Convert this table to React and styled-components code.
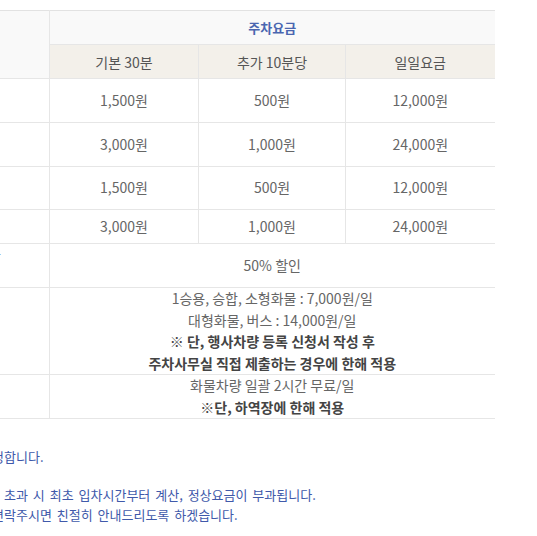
import React from 'react';
import styled, { createGlobalStyle } from 'styled-components';

const Global = createGlobalStyle`
  html, body { margin: 0; padding: 0; background: #fff; overflow: hidden; }
  body { font-family: "Noto Sans CJK KR", "Noto Sans", sans-serif; }
`;

const Wrapper = styled.div`
  padding-top: 10px;
`;

const TableArea = styled.div`
  width: 594px;
  margin-left: -100px;
`;

const Table = styled.table`
  width: 594px;
  border-collapse: collapse;
  table-layout: fixed;
  border-top: 1px solid #e2e2e2;
`;

const Row = styled.tr`
  & > th, & > td { height: ${p => p.$h}px; }
`;

const Th = styled.th`
  padding: 0;
  border: 1px solid #e6e6e6;
  border-top: none;
  font-weight: ${p => (p.$title ? 700 : 400)};
  color: ${p => (p.$title ? '#4a66b0' : '#555')};
  background: ${p => (p.$beige ? '#f3f0ea' : '#f9f9f9')};
  font-size: ${p => (p.$title ? '13px' : '14px')};
  text-align: center;
  vertical-align: middle;
  &:last-child { border-right: none; }
`;

const Td = styled.td`
  padding: 0;
  border: 1px solid #e6e6e6;
  font-size: 14px;
  line-height: 21.5px;
  color: #666;
  text-align: center;
  vertical-align: middle;
  white-space: nowrap;
  &:last-child { border-right: none; }
`;

const Strong = styled.span`
  display: block;
  font-weight: 700;
  color: #444;
`;

const Line = styled.span`
  display: block;
`;

const Notes = styled.div`
  margin-top: 28px;
  font-size: 13px;
  line-height: 20px;
  word-spacing: 2px;
  color: #4059aa;
`;

const NoteLine = styled.p`
  margin: ${p => (p.$gap ? '18px' : '0')} 0 0;
  display: flex;
  white-space: nowrap;
  padding-left: ${p => p.$start}px;
`;

const Hidden = styled.span`
  display: inline-flex;
  justify-content: flex-end;
  width: 0;
`;

export default function App() {
  return (
    <>
      <Global />
      <Wrapper>
        <TableArea>
          <Table>
            <colgroup>
              <col style={{ width: 149 }} />
              <col style={{ width: 149 }} />
              <col style={{ width: 147 }} />
              <col style={{ width: 149 }} />
            </colgroup>
            <thead>
              <Row $h={33}>
                <Th rowSpan={2}>구분</Th>
                <Th colSpan={3} $title>주차요금</Th>
              </Row>
              <Row $h={33}>
                <Th $beige>기본 30분</Th>
                <Th $beige>추가 10분당</Th>
                <Th $beige>일일요금</Th>
              </Row>
            </thead>
            <tbody>
              <Row $h={43}>
                <Td>소형</Td>
                <Td>1,500원</Td>
                <Td>500원</Td>
                <Td>12,000원</Td>
              </Row>
              <Row $h={43}>
                <Td>대형</Td>
                <Td>3,000원</Td>
                <Td>1,000원</Td>
                <Td>24,000원</Td>
              </Row>
              <Row $h={42}>
                <Td>소형</Td>
                <Td>1,500원</Td>
                <Td>500원</Td>
                <Td>12,000원</Td>
              </Row>
              <Row $h={33}>
                <Td>대형</Td>
                <Td>3,000원</Td>
                <Td>1,000원</Td>
                <Td>24,000원</Td>
              </Row>
              <Row $h={43}>
                <Td>
                  <Line>저공해차</Line>
                  <Line>경차</Line>
                </Td>
                <Td colSpan={3}>50% 할인</Td>
              </Row>
              <Row $h={85}>
                <Td>행사</Td>
                <Td colSpan={3}>
                  <Line>1승용, 승합, 소형화물 : 7,000원/일</Line>
                  <Line>대형화물, 버스 : 14,000원/일</Line>
                  <Strong>※ 단, 행사차량 등록 신청서 작성 후</Strong>
                  <Strong>주차사무실 직접 제출하는 경우에 한해 적용</Strong>
                </Td>
              </Row>
              <Row $h={43}>
                <Td>화물</Td>
                <Td colSpan={3}>
                  <Line>화물차량 일괄 2시간 무료/일</Line>
                  <Strong>※단, 하역장에 한해 적용</Strong>
                </Td>
              </Row>
            </tbody>
          </Table>
        </TableArea>
        <Notes>
          <NoteLine $start={4}>
            <Hidden>※ 주차요금은 관련 조례에 따라 결정</Hidden>
            합니다.
          </NoteLine>
          <NoteLine $start={4} $gap>
            <Hidden>※ 회차시간 10분&nbsp;</Hidden>
            초과 시 최초 입차시간부터 계산, 정상요금이 부과됩니다.
          </NoteLine>
          <NoteLine $start={4}>
            <Hidden>※ 기타 문의사항은 주차사무실로 연</Hidden>
            락주시면 친절히 안내드리도록 하겠습니다.
          </NoteLine>
        </Notes>
      </Wrapper>
    </>
  );
}
